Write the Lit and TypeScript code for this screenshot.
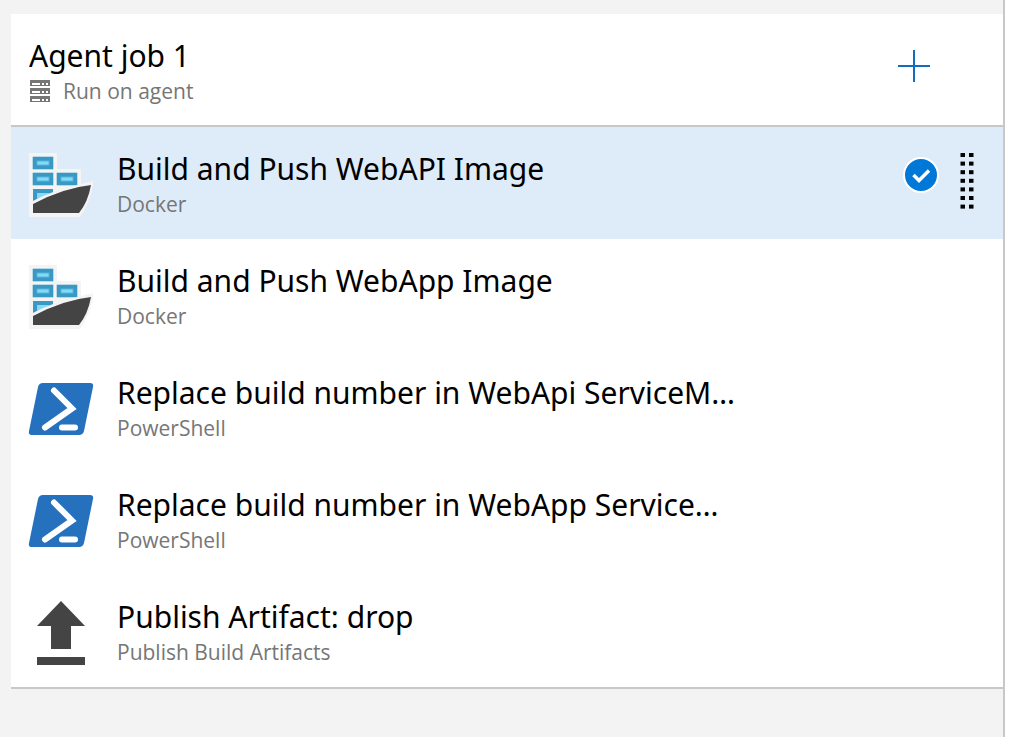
import { LitElement, html, css, svg, nothing } from "lit";
import { customElement, state } from "lit/decorators.js";
import { classMap } from "lit/directives/class-map.js";

type IconName = "docker" | "powershell" | "publish";

interface Task {
  name: string;
  kind: string;
  icon: IconName;
}

const TASKS: Task[] = [
  { name: "Build and Push WebAPI Image", kind: "Docker", icon: "docker" },
  { name: "Build and Push WebApp Image", kind: "Docker", icon: "docker" },
  { name: "Replace build number in WebApi ServiceM…", kind: "PowerShell", icon: "powershell" },
  { name: "Replace build number in WebApp Service…", kind: "PowerShell", icon: "powershell" },
  { name: "Publish Artifact: drop", kind: "Publish Build Artifacts", icon: "publish" },
];

const container = (x: number, y: number) => svg`
  <rect x=${x - 0.3} y=${y - 0.3} width="20.600" height="12.600" fill="#3999c6" />
  <rect x=${x + 4} y=${y + 4} width="12" height="4" fill="#83dcf5" stroke="#59b4d9" stroke-width="1" />
`;

const ICONS = {
  docker: svg`
    <path d="M0 0H28V16H52V31L64 28V33Q60 52 51 64H0Z" fill="#f4f4f4" />
    ${container(4, 4)}${container(4, 20)}${container(28, 20)}
    <path d="M4 36H24V40L4 50Z" fill="#3999c6" />
    <path d="M8 40H21L8 46Z" fill="#83dcf5" />
    <path d="M0 50Q28 34 62 30V33Q34 38 4 53Z" fill="#f4f4f4" />
    <path d="M4 51Q34 35 62 32Q59 49 50 60H4Z" fill="#444" />
  `,
  powershell: svg`
    <path d="M14 6H61Q65 6 64 10L55 54Q54 58 50 58H3Q-1 58 0 54L9 10Q10 6 14 6Z" fill="#2671be" />
    <path d="M25 13.500L43 31.500L16 50.500" fill="none" stroke="#fff" stroke-width="6" stroke-linecap="round" stroke-linejoin="miter" />
    <path d="M33 50.500H46" stroke="#fff" stroke-width="6" stroke-linecap="round" />
  `,
  publish: svg`
    <path d="M32 0L56 25H42V48H22V25H8Z" fill="#444" />
    <path d="M8 56H56V64H8Z" fill="#444" />
  `,
};

@customElement("task-icon")
class TaskIcon extends LitElement {
  static properties = { name: { type: String } };
  declare name: IconName;

  static styles = css`
    :host { display: block; flex: none; }
    .icon { display: block; width: 64px; height: 64px; overflow: visible; }
  `;

  render() {
    return html`<svg class="icon" viewBox="0 0 64 64" aria-hidden="true">${ICONS[this.name]}</svg>`;
  }
}

@customElement("app-root")
class AppRoot extends LitElement {
  @state() selected = 0;

  static styles = css`
    :host {
      display: block;
      min-height: 100vh;
      box-sizing: border-box;
      padding-right: 4px;
      background: #fff;
      color: #000;
      font-family: "Segoe UI", "Noto Sans", "Open Sans", sans-serif;
    }
    * { box-sizing: border-box; }
    .pane {
      min-height: 100vh;
      padding: 14px 0 0 11px;
      background: #f3f3f3;
      border-right: 2px solid #c8c8c8;
    }
    .job { background: #fff; border-bottom: 2px solid #c8c8c8; }
    .header {
      display: flex;
      align-items: center;
      justify-content: space-between;
      height: 113px;
      padding: 0 72px 0 18px;
      border-bottom: 2px solid #c8c8c8;
    }
    .heading { padding-top: 2px; }
    .title, .name {
      margin: 0;
      font-size: 30px;
      line-height: 40px;
      font-weight: 400;
      white-space: nowrap;
      overflow: hidden;
      text-overflow: ellipsis;
    }
    .subtitle, .kind {
      margin: 0;
      font-family: "Segoe UI", "Open Sans", "Noto Sans", sans-serif;
      font-size: 21px;
      line-height: 30px;
      color: #767676;
    }
    .subtitle { display: flex; align-items: center; gap: 12px; }
    .server { display: block; width: 22px; height: 24px; }
    .button {
      display: block;
      padding: 0;
      border: 0;
      background: none;
      cursor: pointer;
    }
    .add { padding-bottom: 8px; }
    .glyph { display: block; }
    .tasks { list-style: none; margin: 0; padding: 0; }
    .task {
      display: flex;
      align-items: center;
      gap: 24px;
      height: 112px;
      padding: 4px 29px 0 18px;
      background: #fff;
      cursor: pointer;
    }
    .chosen { background: #deebf9; }
    .text { flex: 1; min-width: 0; padding-bottom: 2px; }
    .actions { display: flex; align-items: center; gap: 21px; padding-bottom: 8px; }
    .check { display: grid; place-items: center; padding-bottom: 12px; }
    .box, .tick { grid-area: 1 / 1; }
    .box {
      appearance: none;
      width: 36px;
      height: 36px;
      margin: 0;
      border: 2px solid #fff;
      border-radius: 50%;
      background: #0078d7;
    }
    .tick { display: block; pointer-events: none; }
  `;

  private renderActions(task: Task) {
    return html`
      <div class="actions">
        <label class="check">
          <input class="box" type="checkbox" checked aria-label=${`Select ${task.name}`} />
          <svg class="tick" width="36" height="36" viewBox="0 0 36 36" aria-hidden="true">
            <path d="M10.500 18L16 23.500L26 13.500" fill="none" stroke="#fff" stroke-width="3.500" />
          </svg>
        </label>
        <button class="button" type="button" aria-label="Reorder task">
          <svg class="glyph" width="14" height="58" viewBox="0 0 14 58">
            ${[0, 1, 2, 3, 4, 5, 6].map(
              (i) => svg`
                <rect x="0.500" y=${1 + i * 8.6} width="4.500" height="4" />
                <rect x="9" y=${1 + i * 8.6} width="4.500" height="4" />
              `,
            )}
          </svg>
        </button>
      </div>
    `;
  }

  render() {
    return html`
      <main class="pane">
        <section class="job">
          <header class="header">
            <div class="heading">
              <h1 class="title">Agent job 1</h1>
              <p class="subtitle">
                <svg class="server" viewBox="0 0 22 24" aria-hidden="true">
                  ${[1, 9, 17].map(
                    (y) => svg`
                      <rect x="1" y=${y} width="20" height="6" fill="#767676" />
                      <rect x="3" y=${y + 3} width="8" height="2" fill="#fff" />
                      <rect x="13" y=${y + 3} width="2" height="2" fill="#fff" />
                      <rect x="17" y=${y + 3} width="2" height="2" fill="#fff" />
                    `,
                  )}
                </svg>
                <span>Run on agent</span>
              </p>
            </div>
            <button class="button add" type="button" aria-label="Add a task to Agent job 1">
              <svg class="glyph" width="34" height="34" viewBox="0 0 34 34">
                <path d="M1 17H33M17 1V33" stroke="#106ebe" stroke-width="2" />
              </svg>
            </button>
          </header>
          <ul class="tasks">
            ${TASKS.map(
              (task, i) => html`
                <li
                  class=${classMap({ task: true, chosen: i === this.selected })}
                  @click=${() => (this.selected = i)}
                >
                  <task-icon name=${task.icon}></task-icon>
                  <div class="text">
                    <h2 class="name">${task.name}</h2>
                    <p class="kind">${task.kind}</p>
                  </div>
                  ${i === this.selected ? this.renderActions(task) : nothing}
                </li>
              `,
            )}
          </ul>
        </section>
      </main>
    `;
  }
}
